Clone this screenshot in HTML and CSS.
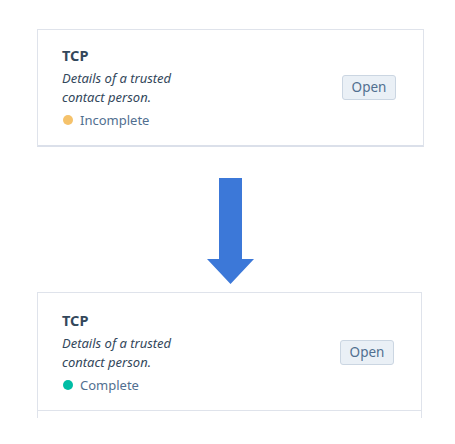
FILE: index.html
```html
<!DOCTYPE html>
<html lang="en">
<head>
  <meta charset="UTF-8" />
  <title>TCP card states</title>
  <link rel="stylesheet" href="styles.css">
</head>
<body>
  <div class="page">
    <div class="card card-before">
      <div class="card-body">
        <div class="info">
          <h2>TCP</h2>
          <p class="desc">Details of a trusted<br>contact person.</p>
          <div class="status"><span class="dot dot-warn"></span>Incomplete</div>
        </div>
        <button class="btn">Open</button>
      </div>
    </div>

    <div class="arrow">
      <svg width="48" height="106" viewBox="0 0 48 106">
        <path d="M12 0 H35 V81 H47 L23.5 106 L0 81 H12 Z" fill="#3c78d8"/>
      </svg>
    </div>

    <div class="card card-after">
      <div class="card-body">
        <div class="info">
          <h2>TCP</h2>
          <p class="desc">Details of a trusted<br>contact person.</p>
          <div class="status"><span class="dot dot-ok"></span>Complete</div>
        </div>
        <button class="btn">Open</button>
      </div>
      <div class="card-tail"></div>
    </div>
  </div>
</body>
</html>
```

FILE: styles.css
```css
body {
  margin: 0;
  background: #fff;
  font-family: 'Noto Sans', 'Liberation Sans', sans-serif;
  color: #33475b;
}

.page {
  padding: 29px 0 0 37px;
}

.card {
  box-sizing: border-box;
  border: 1px solid #dfe3eb;
}

.card-before {
  width: 387px;
  border-bottom: 2px solid #dbe0ea;
}

.card-after {
  width: 385px;
  border-bottom: none;
}

.card-body {
  display: flex;
  align-items: center;
  justify-content: space-between;
  padding: 15px 27px 16px 24px;
}

.card-after .card-body {
  padding-top: 17px;
  border-bottom: 1px solid #dfe3eb;
}

.card-tail {
  height: 7px;
}

h2 {
  margin: 0;
  font-size: 14.5px;
  line-height: 20px;
  font-weight: 700;
}

.desc {
  margin: 4px 0 0;
  font-size: 13px;
  line-height: 19px;
  font-style: italic;
}

.status {
  display: flex;
  align-items: center;
  margin-top: 4px;
  font-size: 13px;
  line-height: 18px;
  color: #516f90;
}

.dot {
  width: 10px;
  height: 10px;
  border-radius: 50%;
  margin: 0 7px 0 1px;
}

.dot-warn {
  background: #f5c26b;
}

.dot-ok {
  background: #00bda5;
}

.btn {
  font-family: inherit;
  font-size: 13.5px;
  color: #516f90;
  background: #eaf0f6;
  border: 1px solid #cbd6e2;
  border-radius: 3px;
  padding: 0;
  width: 54px;
  height: 25px;
}

.arrow {
  width: 387px;
  display: flex;
  justify-content: center;
  padding: 31px 0 8px;
}

.arrow svg {
  display: block;
  margin-left: 1px;
}
```
